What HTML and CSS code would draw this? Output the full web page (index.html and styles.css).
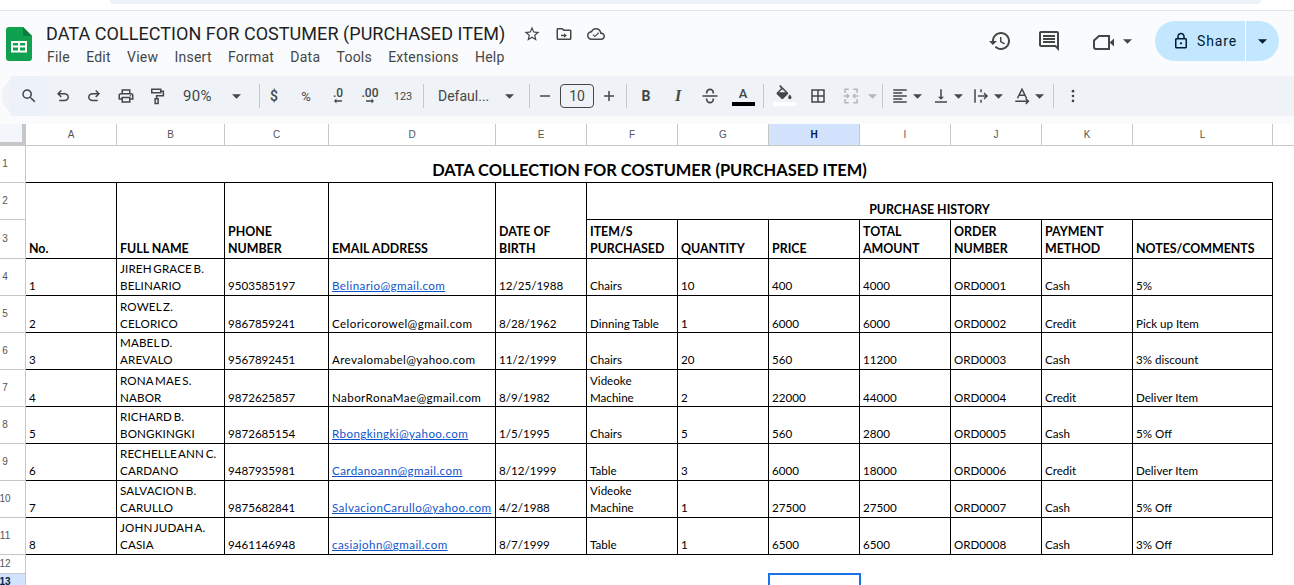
FILE: index.html
```html
<!DOCTYPE html>
<html lang="en">
<head>
<meta charset="utf-8">
<title>DATA COLLECTION FOR COSTUMER (PURCHASED ITEM)</title>
<link rel="stylesheet" href="styles.css">
</head>
<body>
<div class="omni-row"><div class="omni"></div></div>
<header class="doc-head">
  <svg class="logo" viewBox="0 0 26 34"><path fill="#0fa14f" d="M3 0H17L26 9V31a3 3 0 0 1-3 3H3a3 3 0 0 1-3-3V3a3 3 0 0 1 3-3z"/><path fill="#0b7d3e" d="M17 0L26 9H17z"/><path fill="#fff" d="M5 14h16v11.500H5z"/><path fill="#0fa14f" d="M7 16h5v2.500H7zM14 16h5v2.500h-5zM7 20.500h5v3H7zM14 20.500h5v3h-5z"/></svg>
  <div class="doc-info">
    <div class="title-row">
      <h1 class="doc-title">DATA COLLECTION FOR COSTUMER (PURCHASED ITEM)</h1>
      <svg class="ic title-ic" viewBox="0 0 24 24"><path d="M22 9.240l-7.190-.62L12 2 9.190 8.630 2 9.240l5.460 4.730L5.820 21 12 17.270 18.180 21l-1.630-7.030L22 9.240zM12 15.400l-3.760 2.270 1-4.280-3.320-2.880 4.380-.38L12 6.100l1.710 4.040 4.380.38-3.320 2.880 1 4.280L12 15.400z"/></svg>
      <svg class="ic title-ic" viewBox="0 0 24 24"><path d="M20 6h-8l-2-2H4c-1.100 0-2 .9-2 2v12c0 1.100.9 2 2 2h16c1.100 0 2-.9 2-2V8c0-1.100-.9-2-2-2zm0 12H4V6h5.170l2 2H20v10zm-8-5H8v2h4v2l4-3-4-3v2z"/></svg>
      <svg class="ic title-ic" viewBox="0 0 24 24"><path d="M19.350 10.040C18.670 6.590 15.640 4 12 4 9.110 4 6.600 5.640 5.350 8.040 2.340 8.360 0 10.910 0 14c0 3.310 2.690 6 6 6h13c2.760 0 5-2.240 5-5 0-2.640-2.050-4.780-4.650-4.960zM19 18H6c-2.210 0-4-1.790-4-4s1.790-4 4-4h.71C7.370 7.690 9.480 6 12 6c3.040 0 5.500 2.460 5.500 5.500v.5H19c1.660 0 3 1.340 3 3s-1.340 3-3 3z"/><path d="M10.500 14.200l-2-2-1.100 1.100 3.100 3.100 5.500-5.500-1.100-1.100z"/></svg>
    </div>
    <nav class="menu">
      <span>File</span><span>Edit</span><span>View</span><span>Insert</span><span>Format</span><span>Data</span><span>Tools</span><span>Extensions</span><span>Help</span>
    </nav>
  </div>
  <div class="head-actions">
    <svg class="ic head-ic hist" viewBox="0 0 24 24"><path d="M13 3c-4.970 0-9 4.030-9 9H1l3.890 3.890.07.14L9 12H6c0-3.870 3.130-7 7-7s7 3.130 7 7-3.130 7-7 7c-1.930 0-3.680-.79-4.940-2.060l-1.420 1.420C8.270 19.990 10.510 21 13 21c4.970 0 9-4.030 9-9s-4.030-9-9-9zm-1 5v5l4.280 2.540.72-1.210-3.500-2.080V8H12z"/></svg>
    <svg class="ic head-ic cmt" viewBox="0 0 24 24"><path d="M20 2H4c-1.100 0-2 .9-2 2v12c0 1.100.9 2 2 2h14l4 4V4c0-1.100-.9-2-2-2zm0 15.170L18.830 16H4V4h16v13.170zM6 12h12v2H6zm0-3h12v2H6zm0-3h12v2H6z"/></svg>
    <svg class="ic head-ic vid" viewBox="0 0 24 24"><path fill="none" stroke="#444746" stroke-width="2" d="M8 7H18V20H5A2 2 0 0 1 3 18V11.500z"/><path d="M18.500 13.500L23 9.500V17.500z"/></svg>
    <svg class="caret vid-caret" viewBox="0 0 10 5"><path d="M0 0h10L5 5z"/></svg>
    <div class="share">
      <div class="share-main">
        <svg class="lock" viewBox="0 0 24 24"><path d="M18 8h-1V6c0-2.760-2.240-5-5-5S7 3.240 7 6v2H6c-1.100 0-2 .9-2 2v10c0 1.100.9 2 2 2h12c1.100 0 2-.9 2-2V10c0-1.100-.9-2-2-2zM9 6c0-1.660 1.340-3 3-3s3 1.340 3 3v2H9V6zm9 14H6V10h12v10zm-6-3.500a1.500 1.500 0 1 0 0-3 1.500 1.500 0 0 0 0 3z"/></svg>
        <span>Share</span>
      </div>
      <div class="share-more"><svg class="caret" viewBox="0 0 10 5"><path d="M0 0h10L5 5z"/></svg></div>
    </div>
  </div>
</header>

<div class="toolbar">
  <div class="tool t37 search"><svg class="ic tb" viewBox="0 0 24 24"><path d="M15.500 14h-.79l-.28-.27A6.471 6.471 0 0 0 16 9.500 6.500 6.500 0 1 0 9.500 16c1.610 0 3.090-.59 4.230-1.570l.27.28v.79l5 4.990L20.490 19l-4.990-5zm-6 0C7.010 14 5 11.990 5 9.500S7.010 5 9.500 5 14 7.010 14 9.500 11.990 14 9.500 14z"/></svg></div>
  <div class="tool t31"><svg class="ic tb" viewBox="0 -960 960 960"><path d="M280-200v-80h284q63 0 109.500-40T720-420q0-60-46.500-100T564-560H312l104 104-56 56-200-200 200-200 56 56-104 104h252q97 0 166.500 63T800-420q0 94-69.500 157T564-200H280Z"/></svg></div>
  <div class="tool t31"><svg class="ic tb" viewBox="0 -960 960 960"><path d="M396-200q-97 0-166.500-63T160-420q0-94 69.500-157T396-640h252L544-744l56-56 200 200-200 200-56-56 104-104H396q-63 0-109.500 40T240-420q0 60 46.500 100T396-280h284v80H396Z"/></svg></div>
  <div class="tool t33"><svg class="ic tb" viewBox="0 0 24 24"><path d="M19 8h-1V3H6v5H5c-1.660 0-3 1.340-3 3v6h4v4h12v-4h4v-6c0-1.660-1.340-3-3-3zM8 5h8v3H8V5zm8 14H8v-4h8v4zm4-4h-2v-2H6v2H4v-4c0-.55.45-1 1-1h14c.55 0 1 .45 1 1v4z"/><circle cx="18" cy="11.500" r="1"/></svg></div>
  <div class="tool t30"><svg class="ic tb" viewBox="0 0 24 24"><path fill="none" stroke="#444746" stroke-width="2" d="M5 3h12v4.500H5zM17 5.500h3.500v6H11.500V15"/><path fill="none" stroke="#444746" stroke-width="2" d="M9.500 15.500h4V22h-4z"/></svg></div>
  <div class="zoom-sel"><span>90%</span><svg class="caret" viewBox="0 0 10 5"><path d="M0 0h10L5 5z"/></svg></div>
  <div class="sep s1"></div>
  <div class="tool t28 dollar">$</div>
  <div class="tool t36 pct">%</div>
  <div class="tool t28 dec"><span>.0</span><svg viewBox="0 0 10 6"><path d="M0 3l3-3v2h7v2H3v2z"/></svg></div>
  <div class="tool t36 dec"><span>.00</span><svg viewBox="0 0 10 6"><path d="M10 3L7 0v2H0v2h7v2z"/></svg></div>
  <div class="tool t30 num">123</div>
  <div class="sep s2"></div>
  <div class="font-sel"><span>Defaul...</span><svg class="caret" viewBox="0 0 10 5"><path d="M0 0h10L5 5z"/></svg></div>
  <div class="sep"></div>
  <div class="size-group">
    <svg class="pm" viewBox="0 0 14 14"><path d="M2 6.250h10v1.500H2z"/></svg>
    <div class="size-box">10</div>
    <svg class="pm" viewBox="0 0 14 14"><path d="M2 6.250h4.250V2h1.500v4.250H12v1.500H7.750V12h-1.500V7.750H2z"/></svg>
  </div>
  <div class="sep"></div>
  <div class="tool t38 bold">B</div>
  <div class="tool t26 ital">I</div>
  <div class="tool t38"><svg class="ic tb20" viewBox="0 0 24 24"><path fill="none" stroke="#444746" stroke-width="2" d="M3 12h18M8 9V8a4 4 0 0 1 8 0v1M8 15v1a4 4 0 0 0 8 0v-1"/></svg></div>
  <div class="tool t28 color-a"><span>A</span><i class="bar black"></i></div>
  <div class="sep s5"></div>
  <div class="tool t40 color-a fill"><svg class="ic bucket" viewBox="0 0 24 20.400"><path d="M16.560 8.940L7.620 0 6.210 1.410l2.380 2.380-5.150 5.150c-.59.59-.59 1.540 0 2.120l5.500 5.500c.29.29.68.44 1.060.44s.77-.15 1.060-.44l5.500-5.500c.59-.58.59-1.530 0-2.120zM19 11.500s-2 2.170-2 3.500c0 1.100.9 2 2 2s2-.9 2-2c0-1.330-2-3.500-2-3.500z"/><path class="bucket-top" d="M6.200 8.800L10 5.200l3.800 3.600z"/></svg><i class="bar white"></i></div>
  <div class="tool t28"><svg class="ic tb" viewBox="0 0 24 24"><path d="M3 3v18h18V3H3zm8 16H5v-6h6v6zm0-8H5V5h6v6zm8 8h-6v-6h6v6zm0-8h-6V5h6v6z"/></svg></div>
  <div class="tool merge"><svg class="ic tb" viewBox="0 0 24 24"><path fill="none" stroke="#b4b7ba" stroke-width="2" d="M4 8V3h5M15 3h5v5M4 16v5h5M15 21h5v-5M2 12h7M6.500 9.500L9 12l-2.500 2.500M22 12h-7M17.500 9.500L15 12l2.500 2.500"/></svg></div>
  <svg class="caret off-caret" viewBox="0 0 10 5"><path d="M0 0h10L5 5z"/></svg>
  <div class="sep s6"></div>
  <div class="tool tg"><svg class="ic tb" viewBox="0 0 24 24"><path d="M3 21h18v-2H3v2zm0-4h12v-2H3v2zm0-4h18v-2H3v2zm0-4h12V7H3v2zm0-6v2h18V3H3z"/></svg></div>
  <svg class="caret" viewBox="0 0 10 5"><path d="M0 0h10L5 5z"/></svg>
  <div class="tool tg"><svg class="ic tb" viewBox="0 0 24 24"><path d="M16 13h-3V3h-2v10H8l4 4 4-4zM4 19v2h16v-2H4z"/></svg></div>
  <svg class="caret" viewBox="0 0 10 5"><path d="M0 0h10L5 5z"/></svg>
  <div class="tool tg"><svg class="ic tb" viewBox="0 0 24 24"><path fill="none" stroke="#444746" stroke-width="2" d="M4 3v18M12 3v4M12 17v4M8 12h12M16 8l4 4-4 4"/></svg></div>
  <svg class="caret" viewBox="0 0 10 5"><path d="M0 0h10L5 5z"/></svg>
  <div class="tool tg"><svg class="ic tb" viewBox="0 0 24 24"><path fill="none" stroke="#444746" stroke-width="2" d="M6 15L12 3l6 12M8 11h8M3 19h17M17 15.500l3.500 3.500-3.500 3.500"/></svg></div>
  <svg class="caret" viewBox="0 0 10 5"><path d="M0 0h10L5 5z"/></svg>
  <div class="sep s7"></div>
  <div class="tool t38"><svg class="ic tb" viewBox="0 0 24 24"><circle cx="12" cy="5.500" r="1.800"/><circle cx="12" cy="12" r="1.800"/><circle cx="12" cy="18.500" r="1.800"/></svg></div>
</div>

<main class="sheet">
  <div class="corner"></div>
  <div class="ch">A</div><div class="ch">B</div><div class="ch">C</div><div class="ch">D</div><div class="ch">E</div><div class="ch">F</div><div class="ch">G</div><div class="ch sel">H</div><div class="ch">I</div><div class="ch">J</div><div class="ch">K</div><div class="ch">L</div><div class="ch end"></div>

  <div class="rn">1</div>
  <div class="c sheet-title">DATA COLLECTION FOR COSTUMER (PURCHASED ITEM)</div>

  <div class="rn">2</div>
  <div class="c h tall">No.</div>
  <div class="c h tall">FULL NAME</div>
  <div class="c h tall">PHONE<br>NUMBER</div>
  <div class="c h tall">EMAIL ADDRESS</div>
  <div class="c h tall">DATE OF<br>BIRTH</div>
  <div class="c h history">PURCHASE HISTORY</div>

  <div class="rn">3</div>
  <div class="c h">ITEM/S<br>PURCHASED</div>
  <div class="c h">QUANTITY</div>
  <div class="c h">PRICE</div>
  <div class="c h">TOTAL<br>AMOUNT</div>
  <div class="c h">ORDER<br>NUMBER</div>
  <div class="c h">PAYMENT<br>METHOD</div>
  <div class="c h">NOTES/COMMENTS</div>

  <div class="rn">4</div>
  <div class="c">1</div><div class="c name">JIREH GRACE B.<br>BELINARIO</div><div class="c">9503585197</div><div class="c email"><a href="#">Belinario@gmail.com</a></div><div class="c">12/25/1988</div><div class="c">Chairs</div><div class="c">10</div><div class="c">400</div><div class="c">4000</div><div class="c">ORD0001</div><div class="c">Cash</div><div class="c">5%</div>

  <div class="rn">5</div>
  <div class="c low">2</div><div class="c low name">ROWEL Z.<br>CELORICO</div><div class="c low">9867859241</div><div class="c low email">Celoricorowel@gmail.com</div><div class="c low">8/28/1962</div><div class="c low">Dinning Table</div><div class="c low">1</div><div class="c low">6000</div><div class="c low">6000</div><div class="c low">ORD0002</div><div class="c low">Credit</div><div class="c low">Pick up Item</div>

  <div class="rn">6</div>
  <div class="c">3</div><div class="c name">MABEL D.<br>AREVALO</div><div class="c">9567892451</div><div class="c email">Arevalomabel@yahoo.com</div><div class="c">11/2/1999</div><div class="c">Chairs</div><div class="c">20</div><div class="c">560</div><div class="c">11200</div><div class="c">ORD0003</div><div class="c">Cash</div><div class="c">3% discount</div>

  <div class="rn">7</div>
  <div class="c low">4</div><div class="c low name">RONA MAE S.<br>NABOR</div><div class="c low">9872625857</div><div class="c low email">NaborRonaMae@gmail.com</div><div class="c low">8/9/1982</div><div class="c low">Videoke<br>Machine</div><div class="c low">2</div><div class="c low">22000</div><div class="c low">44000</div><div class="c low">ORD0004</div><div class="c low">Credit</div><div class="c low">Deliver Item</div>

  <div class="rn">8</div>
  <div class="c">5</div><div class="c name">RICHARD B.<br>BONGKINGKI</div><div class="c">9872685154</div><div class="c email"><a href="#">Rbongkingki@yahoo.com</a></div><div class="c">1/5/1995</div><div class="c">Chairs</div><div class="c">5</div><div class="c">560</div><div class="c">2800</div><div class="c">ORD0005</div><div class="c">Cash</div><div class="c">5% Off</div>

  <div class="rn">9</div>
  <div class="c">6</div><div class="c name">RECHELLE ANN C.<br>CARDANO</div><div class="c">9487935981</div><div class="c email"><a href="#">Cardanoann@gmail.com</a></div><div class="c">8/12/1999</div><div class="c">Table</div><div class="c">3</div><div class="c">6000</div><div class="c">18000</div><div class="c">ORD0006</div><div class="c">Credit</div><div class="c">Deliver Item</div>

  <div class="rn">10</div>
  <div class="c">7</div><div class="c name">SALVACION B.<br>CARULLO</div><div class="c">9875682841</div><div class="c email"><a href="#">SalvacionCarullo@yahoo.com</a></div><div class="c">4/2/1988</div><div class="c">Videoke<br>Machine</div><div class="c">1</div><div class="c">27500</div><div class="c">27500</div><div class="c">ORD0007</div><div class="c">Cash</div><div class="c">5% Off</div>

  <div class="rn">11</div>
  <div class="c">8</div><div class="c name">JOHN JUDAH A.<br>CASIA</div><div class="c">9461146948</div><div class="c email"><a href="#">casiajohn@gmail.com</a></div><div class="c">8/7/1999</div><div class="c">Table</div><div class="c">1</div><div class="c">6500</div><div class="c">6500</div><div class="c">ORD0008</div><div class="c">Cash</div><div class="c">3% Off</div>

  <div class="rn">12</div>
  <div class="rn sel">13</div>
  <div class="active-cell"></div>
</main>
</body>
</html>
```

FILE: styles.css
```css
* { box-sizing: border-box; }
html, body { margin: 0; height: 585px; overflow: hidden; }
body { background: #f9fbfd; font-family: Roboto, "Liberation Sans", sans-serif; color: #1f1f1f; }

.omni-row { height: 11px; background: #fff; border-bottom: 1px solid #e3e5e8; padding-left: 110px; }
.omni { width: 1151px; height: 4px; background: #edf2fa; border-radius: 0 0 10px 10px; }

.doc-head { height: 65px; display: flex; align-items: flex-start; padding-left: 6px; }
.logo { width: 26px; height: 34px; margin-top: 16px; flex: none; }
.doc-info { margin-left: 14px; padding-top: 11px; flex: none; }
.title-row { display: flex; align-items: center; height: 23px; }
.doc-title { margin: 0 18px 0 0; font-size: 18px; letter-spacing: .05px; font-weight: 400; line-height: 23px; white-space: nowrap; color: #1f1f1f; }
.ic { display: block; fill: #444746; flex: none; }
.title-ic { width: 18px; height: 18px; margin-right: 14px; }
.menu { display: flex; gap: 16.2px; margin-top: 2px; padding-left: 1px; font-size: 14px; letter-spacing: .24px; line-height: 20px; color: #444746; }

.head-actions { margin-left: auto; margin-top: 10px; display: flex; align-items: center; height: 40px; padding-right: 15px; }
.head-ic { width: 24px; height: 24px; }
.cmt { margin-left: 25px; }
.vid { margin-left: 30px; }
.caret { display: block; width: 9px; height: 5px; fill: #444746; flex: none; }
.vid-caret { margin-left: 8px; margin-right: 23px; }
.share { width: 124px; height: 40px; display: flex; background: #c2e7ff; border-radius: 20px; color: #001d35; }
.share-main { width: 91px; display: flex; align-items: center; padding-left: 17px; gap: 7px; font-size: 14px; letter-spacing: .9px; border-right: 1px solid #fff; }
.lock { width: 18px; height: 18px; fill: #001d35; }
.share-more { flex: 1; display: flex; align-items: center; justify-content: center; }
.share-more .caret { fill: #001d35; }

.toolbar { height: 40px; margin-left: 2px; padding-left: 8px; background: #eff3f8; border-radius: 20px 0 0 20px; display: flex; align-items: center; color: #444746; white-space: nowrap; }
.tool { height: 100%; flex: none; display: flex; align-items: center; justify-content: center; }
.t26 { width: 26px; }
.t28 { width: 28px; }
.t30 { width: 30px; }
.t31 { width: 31px; }
.t33 { width: 33px; }
.t36 { width: 36px; }
.t37 { width: 37px; }
.t38 { width: 38px; }
.t40 { width: 40px; }
.tg { width: 26px; margin-left: 5.5px; }
.merge { width: 26px; margin-left: 6px; }
.search { background: #edf2fa; }
.tb { width: 18px; height: 18px; }
.tb20 { width: 20px; height: 20px; }
.zoom-sel { width: 76px; display: flex; align-items: center; padding-left: 11px; font-size: 15px; letter-spacing: .3px; flex: none; }
.zoom-sel .caret { margin-left: 20px; }
.sep { width: 1px; height: 24px; background: #c7c7c7; flex: none; }
.s1 { margin-left: 11px; }
.s2 { margin-left: 5px; }
.s5 { margin-left: 6px; }
.s6 { margin-left: 5px; margin-right: -1.5px; }
.s7 { margin-left: 9.5px; }
.dollar { font-size: 14px; font-weight: 500; }
.pct { font-size: 13px; }
.dec { flex-direction: column; font-size: 12px; font-weight: 500; line-height: 11px; }
.dec svg { width: 8px; height: 6px; fill: #444746; margin-top: -1px; }
.num { font-size: 11px; }
.font-sel { width: 105px; display: flex; align-items: center; padding-left: 14px; font-size: 14px; flex: none; }
.font-sel .caret { margin-left: 16px; }
.size-group { width: 96px; display: flex; align-items: center; padding-left: 8px; flex: none; }
.pm { width: 14px; height: 14px; fill: #444746; flex: none; }
.size-box { width: 34px; height: 24px; margin: 0 8px; border: 1px solid #444746; border-radius: 4px; text-align: center; font-size: 14px; line-height: 22px; }
.bold { font-weight: 700; font-size: 14px; }
.ital { font-style: italic; font-weight: 700; font-size: 16px; font-family: "Liberation Serif", serif; }
.color-a { flex-direction: column; padding-bottom: 2px; font-size: 13px; font-weight: 500; line-height: 17px; }
.color-a span { margin-top: 1px; }
.bar { width: 23px; height: 4px; display: block; }
.bar.black { background: #000; }
.bar.white { background: #fff; }
.bucket { width: 20px; height: 17px; }
.bucket-top { fill: #eff3f8; }
.off-caret { fill: #b4b7ba; margin-left: 4px; }

.sheet { margin-top: 8px; display: grid; grid-template-columns: 26px 91px 108px 104px 167px repeat(7, 91px) 140px 1fr; grid-template-rows: 22px 37px 37px 39px repeat(8, 37px) 19px 18px; background: #fff; }
.corner { background: #f3f6fb; border-right: 4px solid #c7c7c7; border-bottom: 4px solid #c7c7c7; }
.ch { display: flex; align-items: center; justify-content: center; background: #fff; border-right: 1px solid #c7c7c7; border-bottom: 1px solid #c7c7c7; font: 10px "Liberation Sans", sans-serif; color: #555; }
.ch.end { border-right: 0; }
.ch.sel, .rn.sel { background: #d3e3fd; color: #041e49; font-weight: 700; }
.rn { grid-column: 1; display: flex; align-items: center; justify-content: center; padding: 0 15px 2px 0; background: #fff; border-right: 1px solid #c7c7c7; border-bottom: 1px solid #c7c7c7; font: 10px "Liberation Sans", sans-serif; color: #555; }
.c { display: flex; align-items: flex-end; padding: 0 0 1px 3px; border-right: 1px solid #000; border-bottom: 1px solid #000; font: 11.6px/17px Lato, Carlito, sans-serif; color: #000; white-space: nowrap; }
.low { padding-bottom: 0; }
.h { font-weight: 700; font-size: 12.4px; }
.name { letter-spacing: .15px; word-spacing: -1.5px; }
.email { letter-spacing: .4px; }
.tall { grid-row: span 2; }
.history { grid-column: span 7; justify-content: center; padding-left: 0; }
.sheet-title { grid-column: span 12; justify-content: center; padding: 0 0 1px; border-right: 0; font-size: 16.45px; font-weight: 700; line-height: 22px; }
.c a { color: #1155cc; text-decoration: underline; }
.active-cell { grid-row: 14; grid-column: 9; border: 2px solid #1a73e8; border-bottom: 0; margin: -1px -1px 0 -1px; }
```
